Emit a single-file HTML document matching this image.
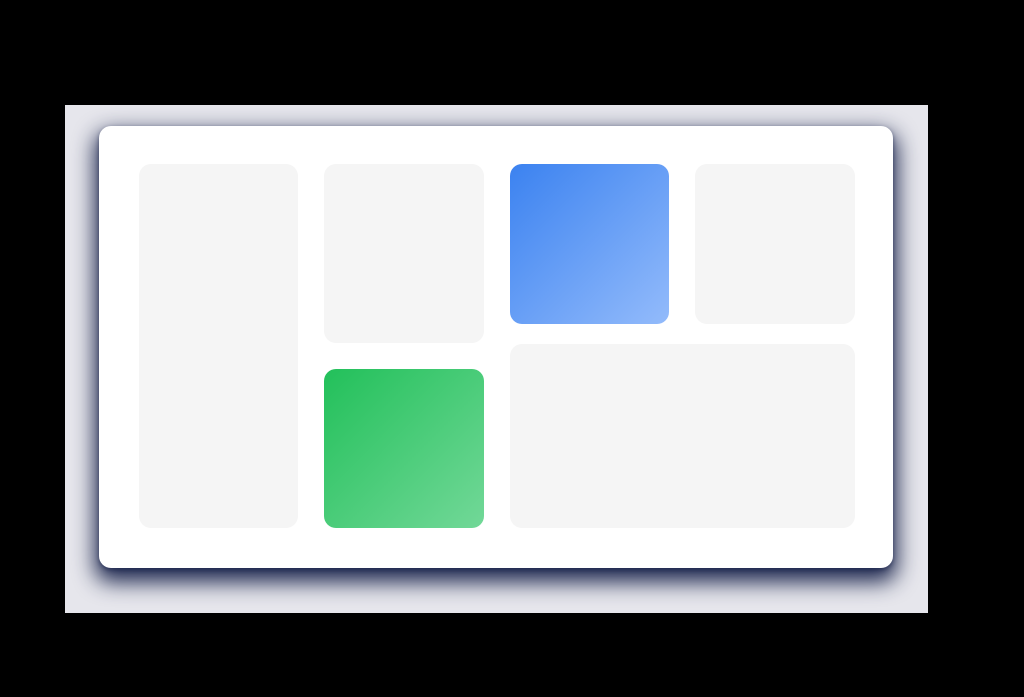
<!DOCTYPE html>
<html><head><style>
html,body{margin:0;padding:0;background:#000;width:1024px;height:697px;overflow:hidden;position:relative}
.bg{position:absolute;left:65px;top:105px;width:863px;height:508px;background:#e6e6ec}
.card{position:absolute;left:99px;top:126px;width:794px;height:442px;background:#fff;border-radius:12px;box-shadow:0 10px 22px 4px rgba(18,28,70,0.95),0 2px 4px rgba(18,28,70,0.5)}
.t{position:absolute;background:#f5f5f5;border-radius:12px}
</style></head><body>
<div class="bg"></div>
<div class="card"></div>
<div class="t" style="left:139px;top:164px;width:159px;height:364px"></div>
<div class="t" style="left:324px;top:164px;width:160px;height:179px"></div>
<div class="t" style="left:510px;top:164px;width:159px;height:160px;background:linear-gradient(135deg,#3b82f0,#93bbfb)"></div>
<div class="t" style="left:695px;top:164px;width:160px;height:160px"></div>
<div class="t" style="left:324px;top:369px;width:160px;height:159px;background:linear-gradient(135deg,#22c05a,#72d898)"></div>
<div class="t" style="left:510px;top:344px;width:345px;height:184px"></div>
</body></html>
